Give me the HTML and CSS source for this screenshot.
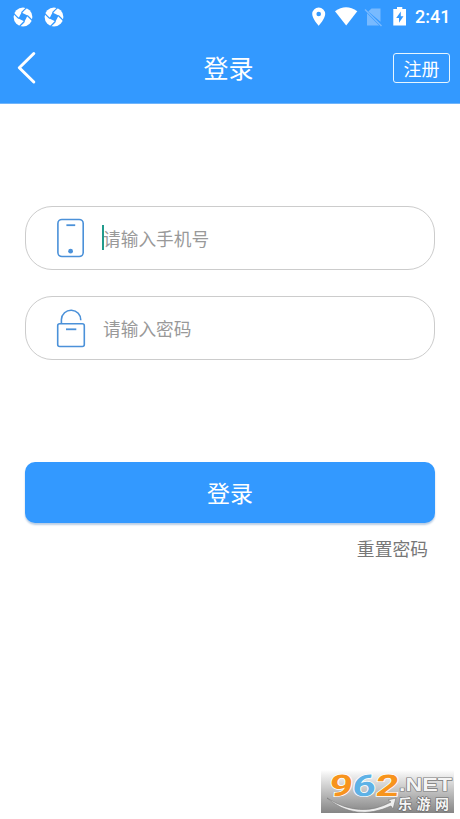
FILE: index.html
```html
<!DOCTYPE html>
<html lang="zh-CN">
<head>
<meta charset="utf-8">
<title>登录</title>
<link rel="stylesheet" href="styles.css">
</head>
<body>
<svg width="0" height="0" class="defs">
  <symbol id="swirl" viewBox="-10 -10 20 20">
    <circle r="9.4" fill="#fff"/>
    <path fill="#39f" d="M-1.5-4.6 4.6-1.5 1.5 4.6-4.6 1.5Z"/>
    <g fill="none" stroke="#39f" stroke-width="1.3">
      <path d="M-1.5-4.2Q.5-6.5 3.6-9.4"/>
      <path d="M-1.5-4.2Q.5-6.5 3.6-9.4" transform="rotate(90)"/>
      <path d="M-1.5-4.2Q.5-6.5 3.6-9.4" transform="rotate(180)"/>
      <path d="M-1.5-4.2Q.5-6.5 3.6-9.4" transform="rotate(270)"/>
    </g>
  </symbol>
</svg>
<header class="top">
  <div class="status">
    <svg class="swirl" width="20" height="20"><use href="#swirl"/></svg>
    <svg class="swirl" width="20" height="20"><use href="#swirl"/></svg>
    <svg class="signals" width="98" height="22" viewBox="310 5 98 22">
      <path fill="#fff" fill-rule="evenodd" d="M318.7 6.5a6.5 6.5 0 0 0-6.5 6.5c0 4.7 6.5 11.8 6.5 11.8s6.5-7.1 6.5-11.8a6.5 6.5 0 0 0-6.5-6.5Zm0 4.2a2.3 2.3 0 1 1 0 4.6 2.3 2.3 0 0 1 0-4.6Z"/>
      <path fill="#fff" d="M335 10.2Q346 2.5 357.3 10.2L346.2 24.5Z"/>
      <path fill="#78baff" d="M371.5 7.5H380.5V20.8L368.3 10.6ZM367 12.3 379.2 24.5H367Z"/>
      <path stroke="#78baff" stroke-width="1.5" d="M365 8.5 381.5 25"/>
      <path fill="#fff" fill-rule="evenodd" d="M393.3 8H397V6H402.3V8H406V24.5H393.3ZM400.8 10.5 396.2 17H399V21.8L403.5 15.3H400.8Z"/>
    </svg>
    <span class="time">2:41</span>
  </div>
  <nav class="bar">
    <svg class="back" width="24" height="36" viewBox="0 0 24 36"><path d="M18.8 3.5 4.3 17.8 18.8 32" fill="none" stroke="#fff" stroke-width="3" stroke-linecap="round" stroke-linejoin="round"/></svg>
    <h1 class="title">登录</h1>
    <a class="register">注册</a>
  </nav>
</header>
<main class="form">
  <label class="field">
    <svg class="icon" width="30" height="40" viewBox="0 0 30 40" fill="none" stroke="#4b91d9" stroke-width="1.6"><rect x="1.9" y="1.5" width="25.3" height="37" rx="4"/><path d="M10.4 7.2H19.2" stroke-width="1.8"/><circle cx="14.6" cy="33.2" r="2.4" fill="#4b91d9" stroke="none"/></svg>
    <span class="hint"><i class="caret"></i>请输入手机号</span>
  </label>
  <label class="field">
    <svg class="icon" width="30" height="40" viewBox="0 0 30 40" fill="none" stroke="#4b91d9" stroke-width="1.6"><rect x="1.7" y="15.7" width="26.6" height="22.8" rx="2"/><path d="M5.4 15.5V11.5A9.7 9.7 0 0 1 24.8 12.3"/><path d="M10 21.3H20.3" stroke-width="1.8"/></svg>
    <span class="hint">请输入密码</span>
  </label>
  <button class="submit">登录</button>
  <a class="reset">重置密码</a>
</main>
<div class="watermark">
  <svg width="133" height="43" viewBox="0 0 133 43">
    <defs><linearGradient id="shade" x2="0" y2="1"><stop stop-color="#fff"/><stop offset=".12" stop-color="#eee"/><stop offset="1" stop-color="#858585"/></linearGradient></defs>
    <rect width="133" height="43" fill="url(#shade)"/>
    <path d="M6 28Q39 49 70 32L67 30 75 28 72 39 70 36Q34 52 6 28Z" fill="#eee" stroke="#777" stroke-width=".6"/>
    <g class="digits" transform="translate(7.5 25.5) skewX(-6) scale(1.36 1)">
      <text class="orange">9</text>
      <text class="blue" x="17">6</text>
      <text class="orange" x="34">2</text>
    </g>
    <text class="net" x="78" y="20.5" textLength="53" lengthAdjust="spacingAndGlyphs">.NET</text>
    <text class="site" x="77" y="39" textLength="51">乐游网</text>
  </svg>
</div>
</body>
</html>
```
FILE: styles.css
```css
* { box-sizing: border-box; }
body {
  margin: 0;
  height: 819px;
  overflow: hidden;
  background: #fff;
  font-family: Roboto, "Noto Sans CJK SC", sans-serif;
}
.defs { position: absolute; }
.top { height: 104px; background: #39f; border-bottom: 1px solid #70b5fb; color: #fff; }
.status { height: 33px; display: flex; align-items: center; padding-left: 13px; }
.swirl { margin-right: 11px; }
.signals { margin-left: auto; }
.time { width: 52px; padding-left: 7px; font-size: 18px; font-weight: 500; letter-spacing: 0; line-height: 33px; }
.bar { height: 70px; display: grid; grid-template-columns: 1fr auto 1fr; align-items: center; padding: 0 10px 0 15px; }
.back { display: block; }
.title { margin: 0 8px 0 0; padding-top: 4px; font-size: 25px; line-height: 36px; font-weight: 400; }
.register {
  justify-self: end;
  width: 57px;
  height: 30px;
  border: 1.5px solid #e7f6ff;
  border-radius: 3px;
  padding-top: 2px;
  font-size: 18px;
  line-height: 28px;
  text-align: center;
}
.form { display: flex; flex-direction: column; padding: 102px 25px 0; }
.field {
  height: 64px;
  margin-bottom: 26px;
  border: 1.5px solid #ccc;
  border-radius: 27px;
  display: flex;
  align-items: center;
  padding-left: 30px;
}
.field + .field { margin-bottom: 102px; }
.hint { position: relative; margin-left: 17px; font-size: 17.7px; color: #999; }
.caret { position: absolute; left: -1px; top: 0; width: 2px; height: 25px; background: #219b8c; }
.submit {
  height: 61px;
  padding: 5px 0 0;
  border: 0;
  border-radius: 10px;
  background: #39f;
  box-shadow: 0 2px 2px #b9cde4;
  color: #fff;
  font: 400 23px/56px Roboto, "Noto Sans CJK SC", sans-serif;
}
.reset { align-self: flex-end; margin: 14px 7px 0 0; font-size: 17.8px; line-height: 26px; color: #777; }
.watermark { position: absolute; left: 321px; top: 770px; width: 133px; height: 43px; }
.watermark svg { display: block; }
.digits text { font: 700 30px Roboto, sans-serif; stroke: #fff; stroke-width: 1.5px; paint-order: stroke; }
.digits .orange { fill: #f7941d; }
.digits .blue { fill: #5eb2e6; }
.net { font: 700 18px "Liberation Sans", sans-serif; fill: #f5f5f5; stroke: #777; stroke-width: 1.2px; paint-order: stroke; }
.site { font: 700 14px "Noto Sans CJK SC", sans-serif; fill: #f5f5f5; stroke: #666; stroke-width: 1.2px; paint-order: stroke; }
```
